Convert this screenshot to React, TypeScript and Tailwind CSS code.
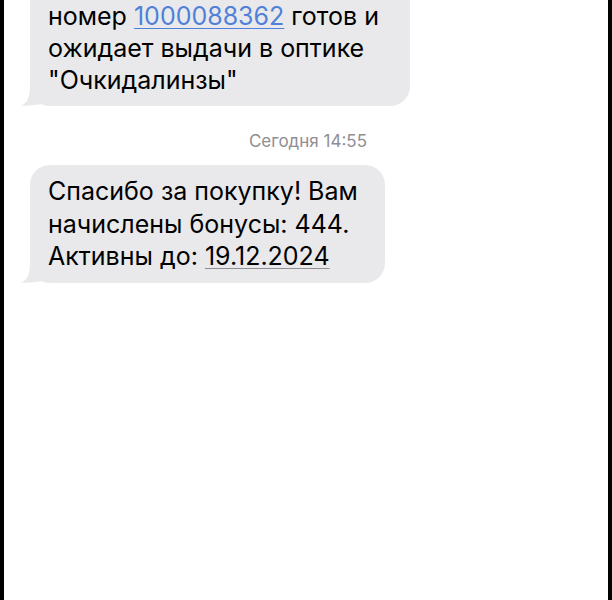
import React from "react";

function Tail() {
  return (
    <svg
      className="absolute bottom-0 left-[-9px]"
      width="22"
      height="20"
      viewBox="0 0 22 20"
    >
      <path d="M22 0 L22 18 C16 19 8 20 0 19.5 C6 17 9 12 9 0 Z" fill="#e9e9eb" />
    </svg>
  );
}

export default function App() {
  return (
    <div
      className="w-full h-[600px] bg-white border-l-4 border-r-4 border-black overflow-hidden"
      style={{ fontFamily: "Inter, 'Liberation Sans', sans-serif" }}
    >
      <div className="flex flex-col pl-[26px]">
        <div className="relative w-[380px] bg-[#e9e9eb] rounded-b-[20px] pl-[18px] pb-[10px] text-[25px] leading-[32px] text-black">
          <div className="whitespace-nowrap">
            номер{" "}
            <span className="text-[#4f81d9] underline decoration-1 underline-offset-[3px]">
              1000088362
            </span>{" "}
            готов и
          </div>
          <div className="whitespace-nowrap">ожидает выдачи в оптике</div>
          <div className="whitespace-nowrap">"Очкидалинзы"</div>
          <Tail />
        </div>

        <div className="w-[337px] text-right text-[17px] leading-[20px] text-[#8e8e93] mt-[25px]">
          Сегодня 14:55
        </div>

        <div className="relative mt-[14px] w-[355px] bg-[#e9e9eb] rounded-[20px] pl-[18px] pt-[10px] pb-[10px] text-[25px] leading-[32.5px] text-black">
          <div className="whitespace-nowrap">Спасибо за покупку! Вам</div>
          <div className="whitespace-nowrap">начислены бонусы: 444.</div>
          <div className="whitespace-nowrap">
            Активны до:{" "}
            <span className="underline decoration-1 decoration-[#8e8e93] underline-offset-[3px]">
              19.12.2024
            </span>
          </div>
          <Tail />
        </div>
      </div>
    </div>
  );
}
